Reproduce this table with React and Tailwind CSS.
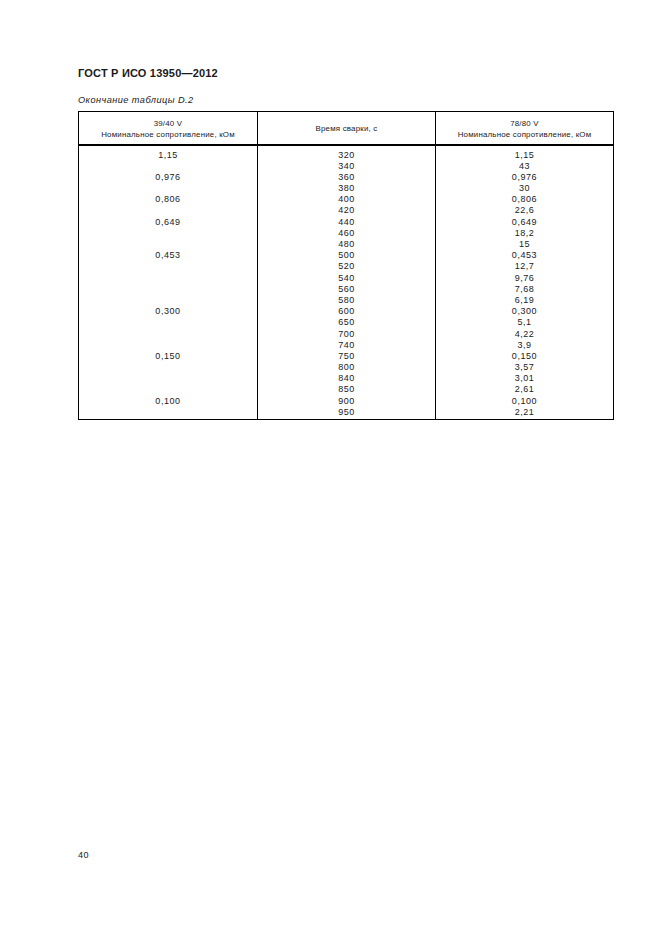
import React from 'react'

const times = [320, 340, 360, 380, 400, 420, 440, 460, 480, 500, 520, 540, 560, 580, 600, 650, 700, 740, 750, 800, 840, 850, 900, 950]

const high = ['1,15', '43', '0,976', '30', '0,806', '22,6', '0,649', '18,2', '15', '0,453', '12,7', '9,76', '7,68', '6,19', '0,300', '5,1', '4,22', '3,9', '0,150', '3,57', '3,01', '2,61', '0,100', '2,21']

// low-voltage column only has values on some rows
const low = { 0: '1,15', 2: '0,976', 4: '0,806', 6: '0,649', 9: '0,453', 14: '0,300', 18: '0,150', 22: '0,100' }

function Column({ values, divider }) {
  return (
    <div className={`pt-[3.5px] pb-[0.5px] text-center ${divider ? 'border-l border-black' : ''}`}>
      {values.map((v, i) => (
        <div key={i} className="h-[11.2px] leading-[11.2px] tracking-[0.55px]">
          {v}
        </div>
      ))}
    </div>
  )
}

export default function App() {
  const lowValues = times.map((_, i) => low[i] || '')

  return (
    <div
      className="w-[661px] h-[936px] bg-white text-[#1a1a1a] relative overflow-hidden"
      style={{ fontFamily: '"Liberation Sans", Arial, sans-serif' }}
    >
      <div className="pl-[78px] pr-[47px] pt-[66px] flex flex-col">
        <div className="h-[14px] leading-[14px] text-[11px] font-bold tracking-[0.2px]">
          ГОСТ Р ИСО 13950—2012
        </div>
        <div className="mt-[14px] h-[12px] leading-[12px] text-[9.2px] italic tracking-[0.45px]">
          Окончание таблицы D.2
        </div>

        {/* table */}
        <div className="mt-[5px] border-[1.5px] border-black">
          <div className="grid grid-cols-3 h-[34px] border-b-2 border-black text-[7.9px]">
            <div className="flex flex-col items-center justify-center pt-[3px] leading-[10.5px] tracking-[0.2px]">
              <span>39/40 V</span>
              <span>Номинальное сопротивление, кОм</span>
            </div>
            <div className="flex items-center justify-center pt-[1px] border-l border-black tracking-[0.2px]">
              Время сварки, с
            </div>
            <div className="flex flex-col items-center justify-center pt-[3px] border-l border-black leading-[10.5px] tracking-[0.2px]">
              <span>78/80 V</span>
              <span>Номинальное сопротивление, кОм</span>
            </div>
          </div>
          <div className="grid grid-cols-3 text-[9px]">
            <Column values={lowValues} />
            <Column values={times} divider />
            <Column values={high} divider />
          </div>
        </div>
      </div>

      <div className="absolute left-[78px] top-[849px] text-[9px] leading-[12px] tracking-[0.5px]">
        40
      </div>
    </div>
  )
}
